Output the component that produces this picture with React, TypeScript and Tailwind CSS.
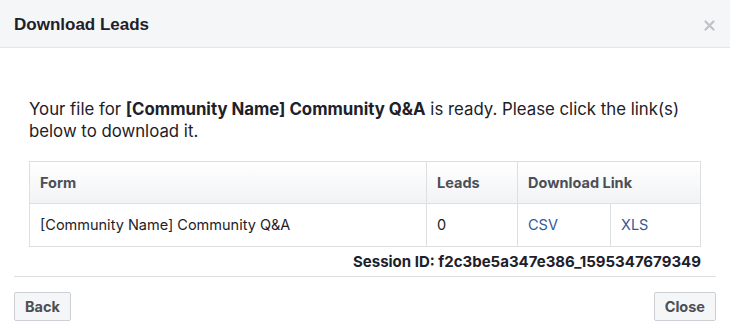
import React from "react";

export default function App() {
  return (
    <div className="w-[730px] h-[336px] bg-white flex flex-col text-[#1d2129] overflow-hidden" style={{ fontFamily: "Inter, 'Liberation Sans', sans-serif" }}>
      <div className="h-[48px] bg-[#f5f6f7] border-b border-[#e5e5e5] flex items-center justify-between pl-[14px] pr-[15px] shrink-0">
        <div className="text-[17px] font-bold leading-none mt-[2px]" style={{ fontFamily: "'Liberation Sans', Arial, sans-serif" }}>Download Leads</div>
        <svg width="11" height="11" viewBox="0 0 11 11" className="mt-[4px]">
          <path d="M1.5 1.5 L9.5 9.5 M9.5 1.5 L1.5 9.5" stroke="#bec3c9" strokeWidth="2.2" strokeLinecap="round" />
        </svg>
      </div>
      <div className="px-[29px] pt-[50px]">
        <p className="text-[16.8px] leading-[22px]">
          Your file for <span className="font-bold">[Community Name] Community Q&amp;A</span> is ready. Please click the link(s) below to download it.
        </p>
        <div className="mt-[19px] border border-[#dddfe2] text-[14.5px]">
          <div className="flex h-[42px] bg-gradient-to-b from-white to-[#f2f3f5] border-b border-[#dddfe2] font-bold text-[#4b4f56]">
            <div className="w-[397px] flex items-center pl-[10px] border-r border-[#dddfe2]">Form</div>
            <div className="w-[91px] flex items-center pl-[10px] border-r border-[#dddfe2]">Leads</div>
            <div className="flex-1 flex items-center pl-[10px]">Download Link</div>
          </div>
          <div className="flex h-[42px] text-[#1d2129]">
            <div className="w-[397px] flex items-center pl-[10px] border-r border-[#dddfe2]">[Community Name] Community Q&amp;A</div>
            <div className="w-[91px] flex items-center pl-[10px] border-r border-[#dddfe2]">0</div>
            <div className="w-[93px] flex items-center pl-[10px] border-r border-[#dddfe2] text-[#365899]">CSV</div>
            <div className="flex-1 flex items-center pl-[10px] text-[#365899]">XLS</div>
          </div>
        </div>
        <div className="text-right text-[15px] font-bold mt-[5px] leading-[20px] text-[#1d2129]">Session ID: f2c3be5a347e386_1595347679349</div>
      </div>
      <div className="mx-[14px] mt-[4px] border-t border-[#dddfe2]"></div>
      <div className="flex justify-between px-[14px] pt-[15px]">
        <button className="h-[29px] px-[10px] bg-[#f5f6f7] border border-[#ccd0d5] rounded-[2px] text-[14.5px] font-bold text-[#4b4f56]">Back</button>
        <button className="h-[29px] px-[10px] bg-[#f5f6f7] border border-[#ccd0d5] rounded-[2px] text-[14.5px] font-bold text-[#4b4f56]">Close</button>
      </div>
    </div>
  );
}
